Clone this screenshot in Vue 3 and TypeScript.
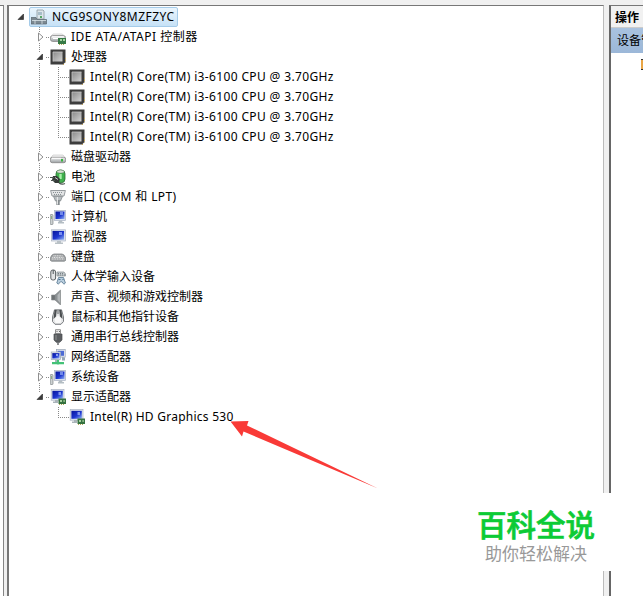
<script setup lang="ts">
interface TreeNode {
	label: string;
	icon: string;
	level: number;
	state: "open" | "closed" | "leaf";
	last?: boolean;
	spacing?: string;
}

const cpu: TreeNode = {
	label: "Intel(R) Core(TM) i3-6100 CPU @ 3.70GHz",
	icon: "cpu",
	level: 2,
	state: "leaf",
	spacing: "wide",
};

const nodes: TreeNode[] = [
	{ label: "IDE ATA/ATAPI 控制器", icon: "ide", level: 1, state: "closed", spacing: "wider" },
	{ label: "处理器", icon: "cpu", level: 1, state: "open" },
	{ ...cpu },
	{ ...cpu },
	{ ...cpu },
	{ ...cpu, last: true },
	{ label: "磁盘驱动器", icon: "disk", level: 1, state: "closed" },
	{ label: "电池", icon: "battery", level: 1, state: "closed" },
	{ label: "端口 (COM 和 LPT)", icon: "port", level: 1, state: "closed", spacing: "wide" },
	{ label: "计算机", icon: "computer", level: 1, state: "closed" },
	{ label: "监视器", icon: "monitor", level: 1, state: "closed" },
	{ label: "键盘", icon: "keyboard", level: 1, state: "closed" },
	{ label: "人体学输入设备", icon: "hid", level: 1, state: "closed" },
	{ label: "声音、视频和游戏控制器", icon: "sound", level: 1, state: "closed" },
	{ label: "鼠标和其他指针设备", icon: "mouse", level: 1, state: "closed" },
	{ label: "通用串行总线控制器", icon: "usb", level: 1, state: "closed" },
	{ label: "网络适配器", icon: "network", level: 1, state: "closed" },
	{ label: "系统设备", icon: "computer", level: 1, state: "closed" },
	{ label: "显示适配器", icon: "display", level: 1, state: "open", last: true },
	{ label: "Intel(R) HD Graphics 530", icon: "display", level: 2, state: "leaf", last: true, spacing: "slight" },
];
</script>

<template>
	<div class="console">
		<svg class="defs" width="0" height="0">
			<defs>
				<linearGradient id="screen" x1="0" y1="0" x2="1" y2="1">
					<stop offset="0" stop-color="#06149a" />
					<stop offset=".55" stop-color="#1c35cf" />
					<stop offset="1" stop-color="#8fb0f4" />
				</linearGradient>
				<linearGradient id="metal" x1="0" y1="0" x2="0" y2="1">
					<stop offset="0" stop-color="#f4f5f5" />
					<stop offset="1" stop-color="#9a9fa2" />
				</linearGradient>
				<linearGradient id="chip" x1="0" y1="0" x2="1" y2="1">
					<stop offset="0" stop-color="#8a8a8a" />
					<stop offset="1" stop-color="#d4d4d4" />
				</linearGradient>
			</defs>
			<symbol id="root" viewBox="0 0 16 16">
				<path d="M6 1h6l1 1v8H6z" fill="#dce5ea" stroke="#8b979e" stroke-width=".8" />
				<path d="M7 3h4v3H7z" fill="#a7bdc9" />
				<path d="M9 7h2v2H9z" fill="#55a866" />
				<path d="M0 8.5h5l1 2h9.5V15H0z" fill="#7c8992" stroke="#59666f" stroke-width=".7" />
				<path d="M1 11.5h14" stroke="#dce4e8" stroke-width=".8" />
				<path d="M4 11v4M11 11v4" stroke="#dce4e8" stroke-width=".8" />
			</symbol>
			<symbol id="cpu" viewBox="0 0 16 16">
				<path d="M.5 .5h15V13L13 15.5H.5z" fill="#3d3d3d" />
				<path d="M15.5 9v4.5M13 15.5h2" stroke="#c9a653" stroke-dasharray="1 1" fill="none" />
				<path d="M3 3h9.5v9.5H3z" fill="url(#chip)" />
				<path d="M3 12.5V3h9.5" stroke="#c8c8c8" stroke-width=".8" fill="none" />
			</symbol>
			<symbol id="disk" viewBox="0 0 16 16">
				<path d="M3 6h10l3 3.5H0z" fill="#f1f1f1" stroke="#c4c4c4" stroke-width=".6" />
				<rect x=".4" y="8.3" width="15.2" height="5.4" rx="1.8" fill="url(#metal)" stroke="#858585" stroke-width=".8" />
				<path d="M11 10h2v2.5h-2z" fill="#36b53c" />
				<path d="M2 9.3h9" stroke="#fff" />
			</symbol>
			<symbol id="ide" viewBox="0 0 16 16">
				<path d="M3 5h9l4 3H0z" fill="#f3f3f3" stroke="#c4c4c4" stroke-width=".6" />
				<rect x=".4" y="6.5" width="15" height="6" rx="2.4" fill="url(#metal)" stroke="#8a8a8a" stroke-width=".8" />
				<path d="M2 8h12M3 9.5h5" stroke="#fff" />
				<path d="M8 9h8v6H8z" fill="#377a46" />
				<path d="M10 10h2v2h-2zM13 10h2v2h-2z" fill="#a6d4a2" />
				<path d="M9 15.5h6" stroke="#b5a657" stroke-dasharray="1 1" />
			</symbol>
			<symbol id="battery" viewBox="0 0 16 16">
				<rect x="6" y="1" width="9" height="12.8" rx="3.8" fill="#3fb04c" stroke="#2c6932" stroke-width=".8" />
				<ellipse cx="10.5" cy="2.6" rx="3.5" ry="1.5" fill="#d9e2d5" stroke="#718070" stroke-width=".5" />
				<path d="M10.5 5v5" stroke="#a8f0a8" stroke-width="2.4" />
				<path d="M3 7h4l3 3-1 4H5l-3-3z" fill="#353b38" />
				<path d="M0 8.5h4M1 11.5h4M9 14q3 2 6 .5" stroke="#4b5350" stroke-width="1.2" fill="none" />
				<path d="M5 8.5l3 2" stroke="#ccc" />
			</symbol>
			<symbol id="port" viewBox="0 0 16 16">
				<path d="M.6 1.5h14.8L14 7H2z" fill="#e2e4e5" stroke="#8d9396" stroke-width=".9" />
				<path d="M3 3.5h10M4 5.5h8" stroke="#8a9195" stroke-dasharray="1 1" />
				<path d="M3.5 7.3h9L10.5 12h-5z" fill="#b7bdc0" stroke="#81888c" stroke-width=".8" />
				<path d="M8 11v5" stroke="#858b8f" stroke-width="3.4" />
				<path d="M7.4 8v7.5" stroke="#eee" stroke-width="1" />
			</symbol>
			<symbol id="computer" viewBox="0 0 16 16">
				<rect x=".2" y="5.5" width="2.8" height="10" rx=".7" fill="#cdd1d2" stroke="#7e8588" stroke-width=".7" />
				<path d="M1 7h1v3H1z" fill="#8cae84" />
				<rect x="4.4" y="1.4" width="11.2" height="10" fill="#d8dfec" stroke="#a9b2c2" stroke-width=".7" />
				<rect x="5.5" y="2.5" width="9" height="7.5" fill="url(#screen)" />
				<path d="M10 3h3v3h-3z" fill="#7189e8" />
				<path d="M9 11.5h3l.5 1.5H14v1.5H8V13h.5z" fill="#b4bdc3" />
			</symbol>
			<symbol id="monitor" viewBox="0 0 16 16">
				<rect x="1.4" y=".8" width="14" height="11.2" fill="#dfe5ef" stroke="#a9b2c2" stroke-width=".7" />
				<rect x="2.5" y="1.9" width="11.6" height="8.8" fill="url(#screen)" />
				<path d="M9 3h3v3H9z" fill="#788ef0" />
				<path d="M7 12h4v1.5h2V15H5v-1.5h2z" fill="#b9c1c6" />
			</symbol>
			<symbol id="keyboard" viewBox="0 0 16 16">
				<path d="M4 5h8q2 0 3.6 3.7v2.5l-1 1H1.4l-1-1V8.7Q2 5 4 5z" fill="#a0a3a5" stroke="#808486" stroke-width=".8" />
				<path d="M3.5 6.8h9M2.3 8.4h11.5M1.8 10h12.5" stroke="#eee" stroke-dasharray="1 .7" />
			</symbol>
			<symbol id="hid" viewBox="0 0 16 16">
				<rect x=".8" y="1" width="4.8" height="10" rx="2" fill="#e2e4e5" stroke="#5a6063" />
				<path d="M3.2 1v4" stroke="#50575b" />
				<path d="M7 3h7l1.5 2v2H7z" fill="#c4cacd" stroke="#858d91" stroke-width=".7" />
				<path d="M8 4.5h6M8 6h7" stroke="#788186" stroke-dasharray="1 1" />
				<path d="M8.5 8.5h5l1.9 5.5-1.5 1.2-2-2.4h-1.5l-2 2.4-1.6-1.2z" fill="#b9cede" stroke="#638199" stroke-width=".9" />
				<path d="M8.5 10.5h2M12.5 10.5h1" stroke="#466d8c" />
			</symbol>
			<symbol id="sound" viewBox="0 0 16 16">
				<path d="M1.5 6h4v5h-4z" fill="#6d7274" stroke="#8b8f91" stroke-width=".6" />
				<path d="M5 6l5.5-5v15L5 11z" fill="#8d9294" stroke="#7c8183" stroke-width=".6" />
				<path d="M10 3v11l-2.5-3V6z" fill="#b4b8ba" />
			</symbol>
			<symbol id="mouse" viewBox="0 0 16 16">
				<path d="M4.5 .8L2.5 8v4.5L5 15.3h6l2.5-2.8V8L11.5 .8z" fill="#e3e4e5" stroke="#6d7174" stroke-width=".9" />
				<path d="M4.6 1h2.2L6 7.5 3.4 10zM11.4 1H9.2l.8 6.5 2.6 2.5z" fill="#4b4f51" />
				<path d="M8 1v4" stroke="#84888a" stroke-width="1.4" />
				<path d="M4.5 10L8 6.5l3.5 3.5-1 4h-5z" fill="#fafafa" />
			</symbol>
			<symbol id="usb" viewBox="0 0 16 16">
				<path d="M5.5.7h5v4h-5z" fill="#eee" stroke="#858585" stroke-width=".9" />
				<path d="M6.5 2h1v1h-1zM9 2h1v1H9z" fill="#676767" />
				<path d="M4 5h8v6l-2.2 2.3H6.2L4 11z" fill="#5b5e61" stroke="#4c4f51" stroke-width=".7" />
				<path d="M6 6v5" stroke="#8d9091" />
				<path d="M8 13v3" stroke="#6b6e70" stroke-width="1.5" />
			</symbol>
			<symbol id="network" viewBox="0 0 16 16">
				<rect x="6.4" y=".6" width="8.8" height="7.5" fill="#e4e8ee" stroke="#98a4b4" stroke-width=".7" />
				<path d="M7.6 1.8H14v5H7.6z" fill="#4c6ad4" />
				<rect x="1.2" y="3" width="9.4" height="7.6" fill="#e4e8ee" stroke="#98a4b4" stroke-width=".7" />
				<rect x="2.3" y="4.1" width="7.2" height="5.4" fill="url(#screen)" />
				<path d="M6 5h2v2H6z" fill="#8aa0f0" />
				<path d="M12 8l3 .5v3h-3z" fill="#96a6b5" />
				<path d="M5 10.5h3V13H5z" fill="#a7b5bd" />
				<path d="M2 14.2h12M8 11v4.5" stroke="#43c277" stroke-width="2.2" />
			</symbol>
			<symbol id="display" viewBox="0 0 16 16">
				<rect x="1.2" y=".6" width="12.8" height="10.6" fill="#e1e6ee" stroke="#a9b2c2" stroke-width=".7" />
				<rect x="2.4" y="1.8" width="10.4" height="8" fill="url(#screen)" />
				<path d="M8.5 3H11v3H8.5z" fill="#8197ed" />
				<path d="M5 11h3v3H3v-1.5h2z" fill="#aab4ba" />
				<path d="M8.5 9.5H16V15H8.5z" fill="#34713f" />
				<path d="M10 11h2v2h-2zM13.5 11h1.2v2h-1.2z" fill="#a5cf9e" />
				<path d="M9 15.5h6" stroke="#b4a856" stroke-dasharray="1 1" />
			</symbol>
		</svg>

		<div class="left-pane"></div>

		<div class="tree">
			<div class="row">
				<span class="root-toggle">
					<svg class="toggle" viewBox="0 0 8 8"><path d="M6.5 1v5.5H1z" fill="#3b3b3b" stroke="#222" stroke-width=".6" /></svg>
				</span>
				<span class="selected">
					<svg class="icon"><use href="#root" /></svg>
					<span class="label root-label">NCG9SONY8MZFZYC</span>
				</span>
			</div>
			<div v-for="(node, i) in nodes" :key="i" class="row">
				<span class="indent"></span>
				<span v-if="node.level === 1" class="branch" :class="{ end: node.last }">
					<svg v-if="node.state === 'closed'" class="toggle closed" viewBox="0 0 8 10"><path d="M2.5 1v8L7 5z" fill="#fff" stroke="#8f8f8f" /></svg>
					<svg v-else class="toggle" viewBox="0 0 8 8"><path d="M6.5 1v5.5H1z" fill="#3b3b3b" stroke="#222" stroke-width=".6" /></svg>
				</span>
				<template v-else>
					<span class="guide" :class="{ blank: node.icon === 'display' }"></span>
					<span class="leaf" :class="{ end: node.last }"></span>
				</template>
				<svg class="icon"><use :href="'#' + node.icon" /></svg>
				<span class="label" :class="node.spacing">{{ node.label }}</span>
			</div>
		</div>

		<div class="actions">
			<div class="actions-title">操作</div>
			<div class="actions-group">设备管理器</div>
			<div class="actions-item"><span class="actions-mark"></span></div>
		</div>

		<svg class="arrow" viewBox="0 0 150 70">
			<path d="M.5 .5L18.5 0 17 4.5 148 67.5 13.5 10.5 12 15.5z" fill="#f93a37" />
		</svg>

		<div class="watermark">
			<div class="brand">百科全说</div>
			<div class="slogan">助你轻松解决</div>
		</div>
	</div>
</template>

<style>
	body {
		margin: 0;
		overflow: hidden;
	}
</style>

<style scoped>
	.console {
		position: relative;
		box-sizing: border-box;
		display: flex;
		width: 643px;
		height: 596px;
		padding-top: 5px;
		overflow: hidden;
		background: #f0f0f0;
		color: #000;
		font-family: "Noto Sans", "Noto Sans CJK SC", sans-serif;
		font-size: 12px;
	}

	.defs {
		position: absolute;
	}

	.left-pane {
		box-sizing: border-box;
		width: 4px;
		margin-right: 3px;
		background: #fff;
		border-top: 1px solid #777;
		border-right: 1px solid #858585;
	}

	.tree {
		box-sizing: border-box;
		width: 597px;
		margin-right: 5px;
		padding-top: 1px;
		background: #fff;
		border-top: 1px solid #777;
		border-left: 2px solid #777;
		border-right: 1px solid #bbb;
	}

	.row {
		display: flex;
		align-items: center;
		height: 20px;
	}

	.root-toggle {
		display: flex;
		width: 12px;
		padding-left: 8px;
	}

	.selected {
		box-sizing: border-box;
		display: flex;
		align-items: center;
		width: 149px;
		height: 20px;
		padding-left: 1px;
		border: 1px solid #a4cbe9;
		border-radius: 2px;
		background: linear-gradient(#eaf5fd, #c6e1f6);
	}

	.indent {
		width: 21px;
	}

	.toggle {
		width: 8px;
		height: 8px;
	}

	.toggle.closed {
		height: 10px;
	}

	.branch {
		box-sizing: border-box;
		display: flex;
		align-items: center;
		width: 20px;
		height: 20px;
		padding-left: 6px;
		background:
			repeating-linear-gradient(90deg, #888 0 1px, transparent 1px 2px) 16px 10px / 4px 1px no-repeat,
			linear-gradient(#fff, #fff) 6px 5px / 9px 11px no-repeat,
			repeating-linear-gradient(#888 0 1px, transparent 1px 2px) 9px 0 / 1px 20px no-repeat;
	}

	.branch.end {
		background:
			repeating-linear-gradient(90deg, #888 0 1px, transparent 1px 2px) 16px 10px / 4px 1px no-repeat,
			repeating-linear-gradient(#888 0 1px, transparent 1px 2px) 9px 0 / 1px 5px no-repeat;
	}

	.guide {
		width: 20px;
		height: 20px;
		background: repeating-linear-gradient(#888 0 1px, transparent 1px 2px) 9px 0 / 1px 20px no-repeat;
	}

	.guide.blank {
		background: none;
	}

	.leaf {
		width: 19px;
		height: 20px;
		background:
			repeating-linear-gradient(90deg, #888 0 1px, transparent 1px 2px) 8px 10px / 11px 1px no-repeat,
			repeating-linear-gradient(#888 0 1px, transparent 1px 2px) 8px 0 / 1px 20px no-repeat;
	}

	.leaf.end {
		background:
			repeating-linear-gradient(90deg, #888 0 1px, transparent 1px 2px) 8px 10px / 11px 1px no-repeat,
			repeating-linear-gradient(#888 0 1px, transparent 1px 2px) 8px 0 / 1px 10px no-repeat;
	}

	.icon {
		flex: none;
		width: 16px;
		height: 16px;
	}

	.label {
		margin-left: 5px;
		line-height: 20px;
		white-space: nowrap;
	}

	.slight {
		letter-spacing: 0.25px;
	}

	.wide {
		letter-spacing: 0.36px;
	}

	.wider {
		letter-spacing: 0.5px;
	}

	.root-label {
		letter-spacing: 0.45px;
	}

	.actions {
		box-sizing: border-box;
		flex: 1;
		overflow: hidden;
		background: #fff;
		border-top: 1px solid #777;
		border-left: 2px solid #666;
		white-space: nowrap;
	}

	.actions-title {
		height: 21px;
		padding-left: 4px;
		line-height: 23px;
		font-weight: bold;
		background: #f1f1f1;
		border-bottom: 1px solid #ccc;
	}

	.actions-group {
		height: 25px;
		padding-left: 6px;
		line-height: 25px;
		background: linear-gradient(#a9c2df, #9bb7d8);
	}

	.actions-item {
		display: flex;
		padding: 6px 0 0 30px;
	}

	.actions-mark {
		flex: none;
		box-sizing: border-box;
		width: 10px;
		height: 11px;
		background: #e9a545;
		border-top: 1px solid #333;
		border-bottom: 1px solid #333;
	}

	.arrow {
		position: absolute;
		left: 230px;
		top: 421px;
		width: 150px;
		height: 70px;
	}

	.watermark {
		position: absolute;
		left: 455px;
		top: 493px;
		box-sizing: border-box;
		width: 165px;
		height: 78px;
		padding: 9px 0 0 22px;
		background: #fff;
		font-family: "Noto Sans CJK SC", sans-serif;
		white-space: nowrap;
	}

	.brand {
		color: #0ccb35;
		font-size: 29.5px;
		font-weight: 500;
		line-height: 43px;
		-webkit-text-stroke: 0.7px #0ccb35;
	}

	.slogan {
		padding-left: 8px;
		color: #999;
		font-size: 17px;
		line-height: 16px;
	}
</style>
